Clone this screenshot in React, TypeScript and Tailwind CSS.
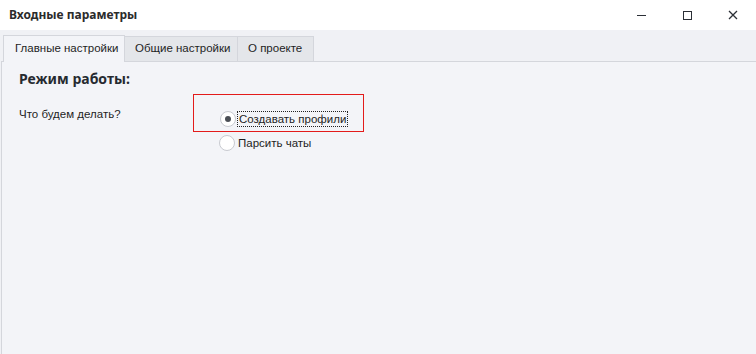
import React from 'react';

export default function App() {
  return (
    <div className="w-[756px] h-[354px] flex flex-col bg-[#f0f1f5] text-[#1e1e1e] overflow-hidden" style={{ fontFamily: '"Liberation Sans", Arial, sans-serif' }}>
      {/* Title bar */}
      <div className="h-[30px] bg-white flex items-center shrink-0">
        <div className="pl-[9px] text-[12px] font-bold text-[#2b2b2b] flex-1 font-['Noto_Sans',sans-serif]">Входные параметры</div>
        <div className="flex items-center h-full">
          <div className="w-[46px] h-full flex items-center justify-center">
            <div className="w-[9px] h-[1px] bg-[#2b2f36]" />
          </div>
          <div className="w-[46px] h-full flex items-center justify-center">
            <div className="w-[9px] h-[9px] border border-[#2b2f36]" />
          </div>
          <div className="w-[46px] h-full flex items-center justify-center">
            <svg width="10" height="10" viewBox="0 0 10 10">
              <path d="M1 1L9 9M9 1L1 9" stroke="#2b2f36" strokeWidth="1.3" />
            </svg>
          </div>
        </div>
      </div>

      {/* Tabs */}
      <div className="flex items-end pl-[3px] pt-[4px] h-[31px] shrink-0">
        <div className="h-[27px] w-[122px] pl-[11px] flex items-center text-[11.5px] bg-[#f3f4f8] border border-b-0 border-[#d4d6dc] relative top-[1px]">Главные настройки</div>
        <div className="h-[25px] w-[113px] pl-[10px] flex items-center text-[11.5px] bg-[#e4e6ea] border border-l-0 border-b-0 border-[#d4d6dc]">Общие настройки</div>
        <div className="h-[25px] w-[76px] pl-[10px] flex items-center text-[11.5px] bg-[#e4e6ea] border border-l-0 border-b-0 border-[#d4d6dc]">О проекте</div>
      </div>

      {/* Content */}
      <div className="flex-1 ml-[1px] bg-[#f3f4f8] border-t border-l border-[#d4d6dc] pl-[17px] pt-[8px]">
        <div className="text-[14px] font-bold text-[#262a30] h-[18px] leading-[18px] font-['Noto_Sans',sans-serif]">Режим работы:</div>
        <div className="flex mt-[6px]">
          <div className="w-[174px] pt-[13px] text-[11.5px] leading-[14px]">Что будем делать?</div>
          <div className="flex flex-col">
            <div className="w-[171px] h-[38px] border border-[#e31b1b] flex items-end pb-[4px] pl-[26px]">
              <div className="flex items-center">
                <div className="w-[16px] h-[16px] rounded-full bg-white border border-[#c8cad0] flex items-center justify-center">
                  <div className="w-[6px] h-[6px] rounded-full bg-[#4a4e55]" />
                </div>
                <div className="ml-[1px] px-[1px] text-[11.5px] leading-[14px] border border-dotted border-[#222]">Создавать профили</div>
              </div>
            </div>
            <div className="flex items-center pl-[26px] mt-[3px]">
              <div className="w-[16px] h-[16px] rounded-full bg-white border border-[#c8cad0]" />
              <div className="ml-[2px] px-[1px] text-[11.5px] leading-[14px]">Парсить чаты</div>
            </div>
          </div>
        </div>
      </div>
    </div>
  );
}
